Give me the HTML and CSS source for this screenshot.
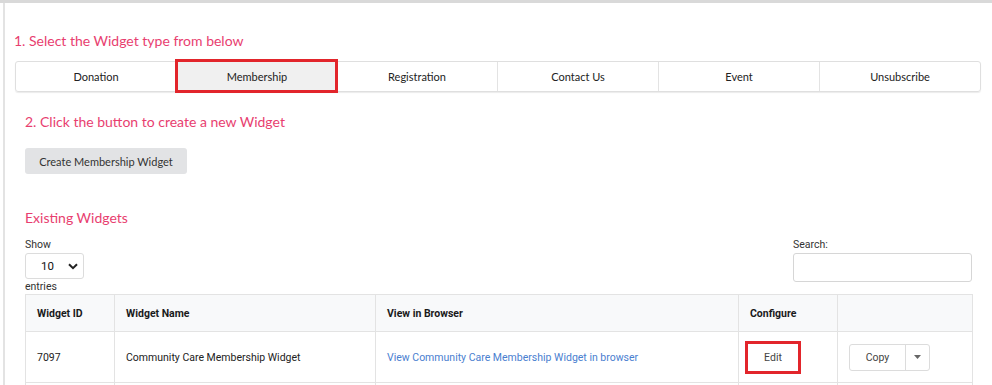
FILE: index.html
```html
<!DOCTYPE html>
<html>
<head>
<meta charset="utf-8">
<link rel="stylesheet" href="styles.css">
</head>
<body>
<div class="frame">
  <div class="panel">
    <h3 class="step1">1. Select the Widget type from below</h3>
    <div class="tabs">
      <div class="tab">Donation</div>
      <div class="tab active">Membership</div>
      <div class="tab">Registration</div>
      <div class="tab">Contact Us</div>
      <div class="tab">Event</div>
      <div class="tab">Unsubscribe</div>
    </div>
    <div class="inner">
      <h3 class="step2">2. Click the button to create a new Widget</h3>
      <button class="create">Create Membership Widget</button>
      <h3 class="existing">Existing Widgets</h3>
      <div class="controls">
        <div class="length">
          <div class="lbl">Show</div>
          <div class="select"><span>10</span><svg width="10" height="7" viewBox="0 0 10 7"><path d="M1 1.2 L5 5.2 L9 1.2" fill="none" stroke="#222" stroke-width="2"/></svg></div>
          <div class="lbl">entries</div>
        </div>
        <div class="search">
          <div class="lbl">Search:</div>
          <div class="input"></div>
        </div>
      </div>
      <table class="grid">
        <thead>
          <tr><th class="c1">Widget ID</th><th class="c2">Widget Name</th><th class="c3">View in Browser</th><th class="c4">Configure</th><th class="c5"></th></tr>
        </thead>
        <tbody>
          <tr>
            <td>7097</td>
            <td>Community Care Membership Widget</td>
            <td><a class="link">View Community Care Membership Widget in browser</a></td>
            <td><span class="edit">Edit</span></td>
            <td><span class="btngroup"><span class="copy">Copy</span><span class="caret"><svg width="7" height="4" viewBox="0 0 7 4"><path d="M0 0 H7 L3.5 4 Z" fill="#666"/></svg></span></span></td>
          </tr>
          <tr class="empty"><td></td><td></td><td></td><td></td><td></td></tr>
        </tbody>
      </table>
    </div>
  </div>
</div>
</body>
</html>
```
FILE: styles.css
```css
html, body { margin: 0; padding: 0; background: #fff; overflow: hidden; }
body { width: 992px; height: 385px; }
.frame {
  border-top: 3px solid #d9d9d9;
  height: 385px;
  box-sizing: border-box;
  overflow: hidden;
}
.panel {
  margin-left: 3px;
  border-left: 2px solid #e3e3e3;
  height: 100%;
  padding-left: 9px;
  padding-top: 29px;
  box-sizing: border-box;
}
h3 {
  margin: 0;
  font-family: Lato, "Open Sans", sans-serif;
  font-weight: 400;
  color: #e83e6f;
  font-size: 14px;
  line-height: 18px;
}
.tabs {
  display: flex;
  margin-top: 11px;
  margin-left: 1px;
  width: 966px;
  height: 31px;
  border: 1px solid #dfdfdf;
  border-radius: 3px;
  box-sizing: border-box;
  box-shadow: 0 1px 1px rgba(0,0,0,0.08);
}
.tab {
  flex: 1;
  display: flex;
  align-items: center;
  justify-content: center;
  font-family: Lato, sans-serif;
  font-size: 11px;
  color: #222;
  border-left: 1px solid #e3e3e3;
}
.tab:first-child { border-left: none; }
.tab.active {
  background: #f0f0f0;
  outline: 3px solid #e2252b;
  outline-offset: -2px;
  margin: -2px -1px -1px 0;
  position: relative;
}
.inner { padding-left: 11px; padding-right: 20px; }
.step2 { margin-top: 21px; }
.create {
  margin-top: 17px;
  display: block;
  width: 162px;
  height: 26px;
  border: none;
  border-radius: 3px;
  background: #e2e3e5;
  font-family: Lato, sans-serif;
  font-size: 11px;
  color: #333;
  padding: 0;
}
.existing { margin-top: 35px; }
.controls {
  display: flex;
  justify-content: space-between;
  margin-top: 11px;
  font-family: Roboto, sans-serif;
  font-size: 10.5px;
  color: #333;
}
.lbl { line-height: 14px; height: 14px; }
.length .lbl:first-child { height: 15px; }
.select {
  width: 59px;
  height: 26px;
  border: 1px solid #dcdcdc;
  border-radius: 3px;
  box-sizing: border-box;
  display: flex;
  align-items: center;
  padding-left: 15px;
  padding-right: 5px;
  justify-content: space-between;
  font-size: 11.5px;
  color: #111;
  margin-bottom: 1px;
}
.search .lbl { height: 15px; }
.input {
  width: 179px;
  height: 29px;
  border: 1px solid #d6d6d6;
  border-radius: 3px;
  box-sizing: border-box;
}
.grid {
  margin-top: 0;
  width: 948px;
  border-collapse: collapse;
  font-family: Roboto, sans-serif;
  font-size: 10.5px;
  color: #222;
}
.grid th, .grid td {
  border: 1px solid #e3e3e3;
  text-align: left;
  padding: 0 0 0 11px;
}
.grid th {
  background: #f8f9fa;
  font-weight: 700;
  height: 36px;
  color: #1a1a1a;
}
.grid td { height: 50px; }
.c1 { width: 77px; }
.c2 { width: 249px; }
.c3 { width: 351px; }
.c4 { width: 87px; }
.link { color: #4a80d0; }
.edit {
  display: inline-block;
  width: 56px;
  height: 33px;
  border: 3px solid #e2252b;
  box-sizing: border-box;
  text-align: center;
  line-height: 27px;
  color: #444;
  margin-left: -5px;
}
.btngroup {
  display: inline-flex;
  margin-left: 0;
  border: 1px solid #dcdcdc;
  border-radius: 3px;
  height: 27px;
  box-sizing: border-box;
  color: #444;
}
.copy {
  width: 55px;
  display: flex;
  align-items: center;
  justify-content: center;
  border-right: 1px solid #dcdcdc;
}
.caret {
  width: 23px;
  display: flex;
  align-items: center;
  justify-content: center;
}
.grid .empty td { height: 10px; }
```
